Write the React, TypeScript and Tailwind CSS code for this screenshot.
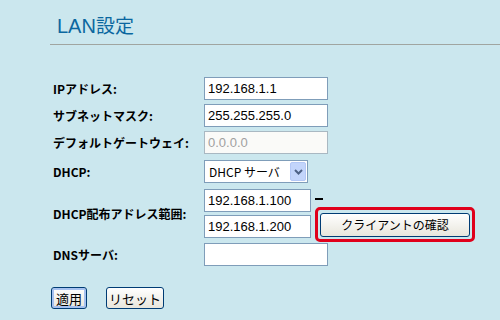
import React from 'react';

const jp = { fontFamily: '"Noto Sans CJK JP", "Liberation Sans", sans-serif' };
const num = { fontFamily: '"Liberation Sans", "Noto Sans CJK JP", sans-serif' };

const Label: React.FC<{ children: React.ReactNode }> = ({ children }) => (
    <div className="w-[151px] shrink-0 text-[12px] font-bold text-black leading-none" style={jp}>
        {children}
    </div>
);

const TextBox: React.FC<{ value: string; width?: string; disabled?: boolean }> = ({ value, width = 'w-[124px]', disabled }) => (
    <div
        className={`${width} h-[23px] border flex items-center pl-[3px] text-[13px] ${
            disabled ? 'bg-[#fafaf8] border-[#a9b8c2] text-[#a0a0a0]' : 'bg-white border-[#7f9db9] text-black'
        }`}
        style={num}
    >
        {value}
    </div>
);

export default function App() {
    return (
        <div className="w-[500px] h-[320px] bg-[#cbe7ee] overflow-hidden">
            {/* Title */}
            <div className="ml-[50px] h-[45px] border-b border-[#a0a5a0] pt-[13px] pl-[7px]">
                <span className="text-[20px] leading-[24px] text-[#0b67a0]" style={num}>LAN</span>
                <span className="text-[19px] leading-[24px] text-[#0b67a0]" style={jp}>設定</span>
            </div>

            {/* Form */}
            <div className="pl-[53px] pt-[32px] flex flex-col">
                <div className="flex items-center h-[23px]">
                    <Label>IPアドレス:</Label>
                    <TextBox value="192.168.1.1" />
                </div>
                <div className="flex items-center h-[23px] mt-[4px]">
                    <Label>サブネットマスク:</Label>
                    <TextBox value="255.255.255.0" />
                </div>
                <div className="flex items-center h-[23px] mt-[4px]">
                    <Label>デフォルトゲートウェイ:</Label>
                    <TextBox value="0.0.0.0" disabled />
                </div>
                <div className="flex items-center h-[23px] mt-[6px]">
                    <Label>DHCP:</Label>
                    <div className="w-[104px] h-[23px] bg-white border border-[#7f9db9] flex items-center justify-between pl-[4px] pr-[1px]">
                        <span className="text-[12px] text-black" style={jp}>DHCP サーバ</span>
                        <span className="w-[16px] h-[19px] rounded-[2px] bg-[#c3d5fb] border border-[#b4c8f6] flex items-center justify-center">
                            <svg width="9" height="6" viewBox="0 0 9 6">
                                <path d="M1 1l3.5 3.5L8 1" fill="none" stroke="#4d6185" strokeWidth="2" />
                            </svg>
                        </span>
                    </div>
                </div>
                <div className="flex items-center mt-[6px]">
                    <Label>DHCP配布アドレス範囲:</Label>
                    <div className="flex flex-col gap-[3px]">
                        <div className="flex items-center h-[23px]">
                            <TextBox value="192.168.1.100" width="w-[107px]" />
                            <span className="ml-[4px] -mt-[4px] w-[8px] h-[2px] bg-black" />
                        </div>
                        <div className="flex items-center h-[23px]">
                            <TextBox value="192.168.1.200" width="w-[107px]" />
                            <div className="ml-[4px] -mt-[4px] border-[3px] border-[#e0001b] rounded-[5px] p-[2px]">
                                <button
                                    className="w-[150px] h-[24px] rounded-[3px] border border-[#003c74] bg-gradient-to-b from-white to-[#e8e6dc] text-[12px] text-black leading-none"
                                    style={jp}
                                >
                                    クライアントの確認
                                </button>
                            </div>
                        </div>
                    </div>
                </div>
                <div className="flex items-center h-[23px] mt-[5px]">
                    <Label>DNSサーバ:</Label>
                    <TextBox value="" />
                </div>

                {/* Buttons */}
                <div className="flex items-center gap-[19px] mt-[21px] -ml-[2px]">
                    <button
                        className="w-[36px] h-[22px] rounded-[3px] border border-[#003c74] bg-gradient-to-b from-white to-[#e8e6dc] shadow-[inset_0_0_0_2px_#a6c2f0] text-[13px] text-black leading-none"
                        style={jp}
                    >
                        適用
                    </button>
                    <button
                        className="w-[58px] h-[22px] rounded-[3px] border border-[#003c74] bg-gradient-to-b from-white to-[#e8e6dc] text-[13px] text-black leading-none"
                        style={jp}
                    >
                        リセット
                    </button>
                </div>
            </div>
        </div>
    );
}
